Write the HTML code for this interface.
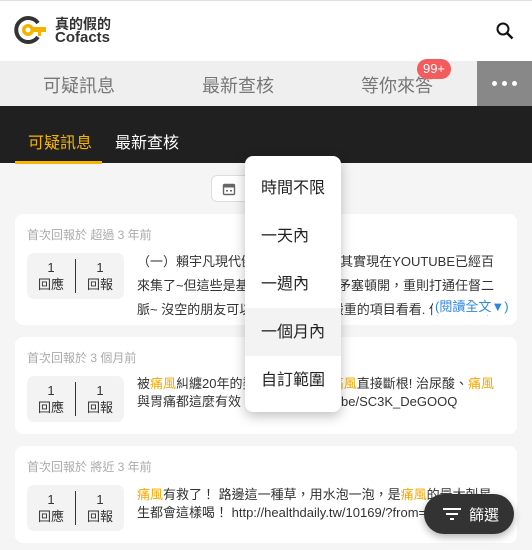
<!DOCTYPE html>
<html><head><meta charset="utf-8"><style>
*{box-sizing:border-box;margin:0;padding:0}
body{width:532px;height:550px;overflow:hidden;background:#f5f5f5;font-family:"Liberation Sans","Noto Sans CJK TC",sans-serif;position:relative;color:#333}
.top{position:absolute;top:0;left:0;width:532px;height:61px;background:#fff;border-top:1px solid #e0e0e0}
.nav{position:absolute;top:61px;left:0;width:532px;height:45px;background:#efefef}
.nav span{position:absolute;top:11px;font-size:18px;color:#777}
.more{position:absolute;right:0;top:0;width:55px;height:45px;background:#888}
.dot{position:absolute;top:20px;width:5px;height:5px;border-radius:50%;background:#fff}
.badge{position:absolute;left:417px;top:-2px;width:34px;height:20px;border-radius:10px;background:#f35c5c;color:#fff;font-size:13px;text-align:center;line-height:20px}
.dark{position:absolute;top:106px;left:0;width:532px;height:57px;background:#202020}
.dark span{position:absolute;top:23px;font-size:16px;color:#fff}
.card{position:absolute;left:15px;width:502px;background:#fff;border-radius:8px;overflow:hidden}
.date{position:absolute;left:12px;top:12px;font-size:12px;color:#aaa}
.stats{position:absolute;left:12px;width:97px;height:46px;background:#f3f3f3;border-radius:7px}
.stats div{position:absolute;width:48px;text-align:center;font-size:13px;line-height:17px;top:6px;color:#333}
.stats i{position:absolute;left:48px;top:6px;width:1px;height:34px;background:#333}
.txt{position:absolute;left:122px;width:357px;font-size:13px;color:#333;overflow:hidden;white-space:nowrap}
.ln{position:relative;overflow:hidden}
.ln b{font-weight:normal;position:absolute;right:0;top:0;background:#fff;padding-left:4px}
.y{color:#f5a800}
.menu{position:absolute;left:245px;top:156px;width:96px;height:256px;background:#fff;border-radius:8px;box-shadow:0 4px 12px rgba(0,0,0,.25)}
.menu div{position:absolute;left:0;width:96px;height:48px;line-height:50px;padding-left:16px;font-size:16px;color:#222}
.fab{position:absolute;left:424px;top:494px;width:90px;height:40px;border-radius:20px;background:#333;color:#fff;font-size:15px;box-shadow:0 3px 8px rgba(0,0,0,.3)}
</style></head><body>
<div class="top">
<svg style="position:absolute;left:14px;top:14px" width="34" height="30" viewBox="0 0 34 30"><path d="M24 8 A12 12 0 1 0 24 22" fill="none" stroke="#333" stroke-width="4"/><circle cx="14" cy="15" r="6" fill="#f5b300"/><circle cx="14" cy="15" r="2.5" fill="#fff"/><rect x="18" y="12" width="14" height="5" fill="#f5b300"/><rect x="24" y="17" width="3" height="4" fill="#f5b300"/></svg>
<div style="position:absolute;left:55px;top:13px;font-size:14px;font-weight:bold;color:#333">真的假的</div>
<div style="position:absolute;left:55px;top:28px;font-size:15px;font-weight:bold;color:#333">Cofacts</div>
<svg style="position:absolute;left:495px;top:20px" width="20" height="20" viewBox="0 0 20 20"><circle cx="8" cy="8" r="5.5" fill="none" stroke="#111" stroke-width="2"/><path d="M12 12 L17.5 17.5" stroke="#111" stroke-width="2.4"/></svg>
</div>
<div class="nav">
<span style="left:43px">可疑訊息</span><span style="left:202px">最新查核</span><span style="left:361px">等你來答</span>
<div class="badge">99+</div>
<div class="more"><div class="dot" style="left:15px"></div><div class="dot" style="left:25px"></div><div class="dot" style="left:35px"></div></div>
</div>
<div class="dark"><span style="left:28px;color:#f7b500">可疑訊息</span><span style="left:115px">最新查核</span><div style="position:absolute;left:15px;top:55px;width:87px;height:3px;background:#f7b500"></div></div>
<div style="position:absolute;left:211px;top:175px;width:60px;height:27px;border:1px solid #ddd;border-radius:6px;background:#fff"><svg style="position:absolute;left:10px;top:6px" width="14" height="14" viewBox="0 0 14 14"><rect x="1.5" y="2.5" width="11" height="10" rx="1" fill="none" stroke="#666" stroke-width="1.4"/><rect x="1.5" y="2.5" width="11" height="3" fill="#666"/><rect x="4" y="8" width="2" height="1.5" fill="#666"/><rect x="8" y="8" width="2" height="1.5" fill="#666"/></svg></div>
<div class="card" style="top:214px;height:111px">
<div class="date">首次回報於 超過 3 年前</div>
<div class="stats" style="top:39px"><div style="left:0">1<br>回應</div><i></i><div style="left:49px">1<br>回報</div></div>
<div class="txt" style="top:36px;height:86px;line-height:24px">
<div class="ln">（一）賴宇凡現代健康講座重點<b>真（其實現在YOUTUBE已經百</b></div>
<div class="ln">來集了~但這些是基礎，輕<b>則矛塞頓開，重則打通任督二</b></div>
<div class="ln">脈~ 沒空的朋友可以先挑覺<b>得嚴重的項目看看. 保証比通樂</b></div>
<div class="ln">還有用喔. ）會會裡面有談<b>糖平衡飲食https</b></div>
</div>
<div style="position:absolute;left:418px;top:82px;font-size:13px;color:#2f86e0;background:#fff;padding-left:2px">(閱讀全文▼)</div>
</div>
<div class="card" style="top:337px;height:97px">
<div class="date">首次回報於 3 個月前</div>
<div class="stats" style="top:39px"><div style="left:0">1<br>回應</div><i></i><div style="left:49px">1<br>回報</div></div>
<div class="txt" style="top:38px;line-height:18px">
<div class="ln">被<span class="y">痛風</span>糾纏20年的婆婆，<b>的<span class="y">痛風</span>直接斷根! 治尿酸、<span class="y">痛風</span></b></div>
<div class="ln">與胃痛都這麼有效！ ht<b style="right:auto;left:200px">be/SC3K_DeGOOQ</b></div>
</div>
</div>
<div class="card" style="top:446px;height:97px">
<div class="date">首次回報於 將近 3 年前</div>
<div class="stats" style="top:39px"><div style="left:0">1<br>回應</div><i></i><div style="left:49px">1<br>回報</div></div>
<div class="txt" style="top:40px;line-height:18px">
<div class="ln"><span class="y">痛風</span>有救了！ 路邊這一種草，用水泡一泡，是<span class="y">痛風</span>的最大剋星！連醫</div>
<div class="ln">生都會這樣喝！ http://healthdaily.tw/10169/?from=line</div>
</div>
</div>
<div class="menu">
<div style="top:8px">時間不限</div><div style="top:56px">一天內</div><div style="top:104px">一週內</div><div style="top:152px;background:#f3f3f3">一個月內</div><div style="top:200px">自訂範圍</div>
</div>
<div class="fab"><svg style="position:absolute;left:19px;top:12px" width="18" height="16" viewBox="0 0 18 16"><rect x="0" y="2" width="18" height="2" fill="#fff"/><rect x="3" y="7" width="12" height="2" fill="#fff"/><rect x="7" y="12" width="4" height="2" fill="#fff"/></svg><span style="position:absolute;left:45px;top:10px">篩選</span></div>
</body></html>
